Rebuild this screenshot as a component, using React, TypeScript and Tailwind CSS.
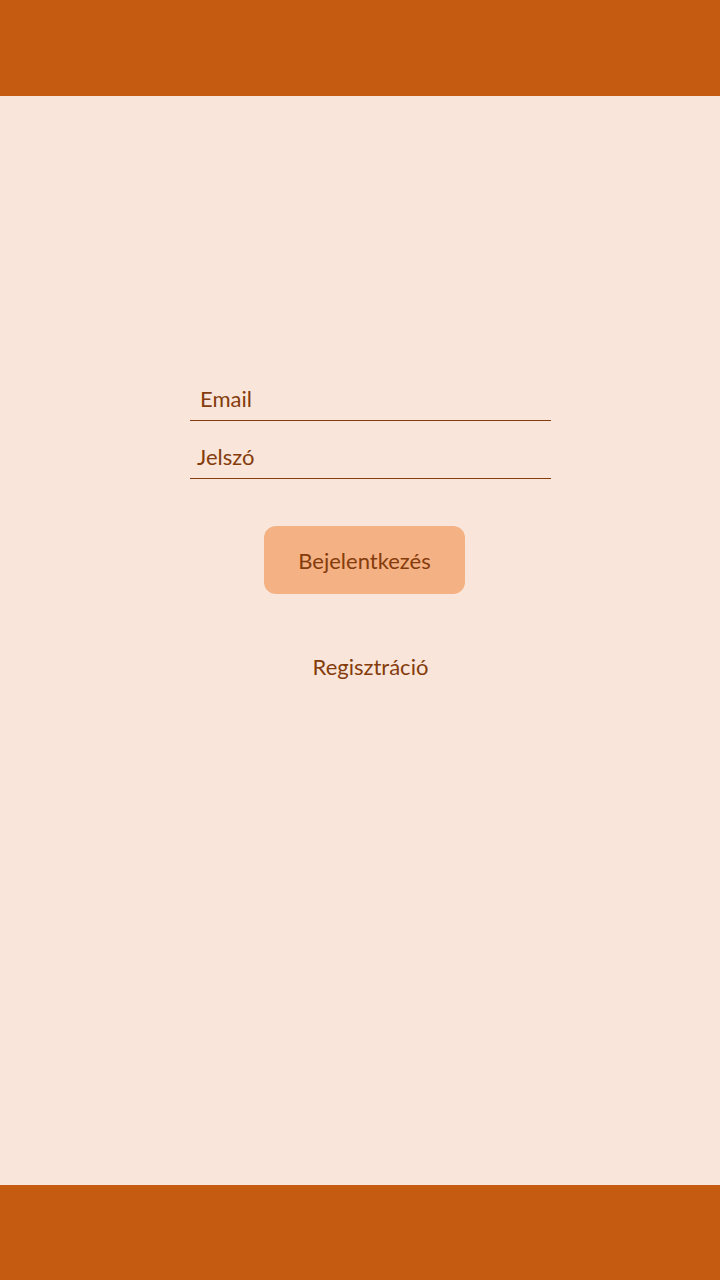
import React from 'react';

export default function App() {
  return (
    <div className="flex flex-col h-[1280px] w-full bg-[#f9e5d9] text-[#843c0c]" style={{ fontFamily: 'Lato, "Open Sans", sans-serif' }}>
      <div className="h-[96px] bg-[#c55a11]" />

      <main className="flex-1 pt-[289px]">
        {/* Input fields */}
        <div className="ml-[190px] w-[361px]">
          <div className="h-[36px] border-b border-[#843c0c] pl-[10px] text-[22px] leading-[28px]">Email</div>
          <div className="mt-[22px] h-[36px] border-b border-[#843c0c] pl-[7px] text-[22px] leading-[28px]">Jelszó</div>
        </div>

        <button className="mt-[47px] ml-[264px] w-[201px] h-[68px] rounded-[12px] bg-[#f4b183] text-[22px] text-[#843c0c] flex items-center justify-center">
          Bejelentkezés
        </button>

        <div className="ml-[190px] w-[361px] mt-[59px] text-center text-[22px] leading-[28px]">Regisztráció</div>
      </main>

      <div className="h-[95px] bg-[#c55a11]" />
    </div>
  );
}
